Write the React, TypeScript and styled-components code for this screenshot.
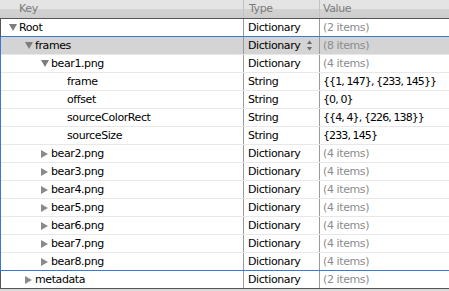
import styled, { createGlobalStyle } from "styled-components"

const GlobalStyle = createGlobalStyle`
    html, body {
        margin: 0;
        padding: 0;
        background: #d9d9d9;
    }
    body {
        font-family: "DejaVu Sans", "Liberation Sans", sans-serif;
        font-size: 11px;
        letter-spacing: -0.4px;
    }
`

const RING = "#3a78d6"

const Table = styled.div`
    width: 449px;
    background: #fff;
    overflow: hidden;
`

const Header = styled.div`
    display: flex;
    height: 18px;
    border-bottom: 1px solid #555;
    background: linear-gradient(#e4e4e4 0, #e4e4e4 50%, #d2d2d2 50%, #cecece 100%);
    color: #7a7a7a;
    line-height: 18px;
`

const HeadCell = styled.div<{ $w?: number; $pad: number }>`
    flex: ${(p) => (p.$w ? `0 0 ${p.$w}px` : "1")};
    box-sizing: border-box;
    padding-left: ${(p) => p.$pad}px;
    border-right: ${(p) => (p.$w ? "1px solid #c2c2c2" : "none")};
`

const Body = styled.div`
    border-left: 1px solid #555;
`

const Group = styled.div`
    margin-left: -1px;
    border-left: 1px solid ${RING};
`

const Row = styled.div<{ $selected?: boolean; $line?: string }>`
    display: flex;
    height: 17px;
    line-height: 17px;
    border-bottom: 1px solid ${(p) => p.$line || "#e8e8e8"};
    background: ${(p) => (p.$selected ? "#d4d4d4" : "#fff")};
    color: #000;
`

const KeyCell = styled.div<{ $level: number }>`
    flex: 0 0 243px;
    box-sizing: border-box;
    border-right: 1px solid #9a9a9a;
    display: flex;
    align-items: center;
    padding-left: ${(p) => 8 + p.$level * 16}px;
    white-space: nowrap;
`

const Disclosure = styled.span<{ $open?: boolean; $leaf?: boolean }>`
    flex: 0 0 10px;
    height: 17px;
    display: flex;
    align-items: center;
    justify-content: flex-start;
    visibility: ${(p) => (p.$leaf ? "hidden" : "visible")};
    &::before {
        content: "";
        display: block;
        ${(p) =>
            p.$open
                ? `border-left: 4px solid transparent; border-right: 4px solid transparent; border-top: 7px solid #7d7d7d;`
                : `border-top: 4px solid transparent; border-bottom: 4px solid transparent; border-left: 7px solid #8a8a8a;`}
    }
`

const TypeCell = styled.div`
    flex: 0 0 76px;
    box-sizing: border-box;
    border-right: 1px solid #9a9a9a;
    padding-left: 4px;
    display: flex;
    align-items: center;
    justify-content: space-between;
    padding-right: 7px;
`

const ValueCell = styled.div<{ $muted?: boolean }>`
    flex: 1;
    padding-left: 3px;
    color: ${(p) => (p.$muted ? "#8c8c8c" : "#000")};
    letter-spacing: ${(p) => (p.$muted ? "-0.4px" : "-0.9px")};
    white-space: nowrap;
`

const Stepper = () => (
    <svg width="5" height="11" viewBox="0 0 5 11">
        <path d="M2.5 0.5 L5 4 L0 4 Z" fill="#6a6a6a" />
        <path d="M0 7 L5 7 L2.5 10.5 Z" fill="#6a6a6a" />
    </svg>
)

type Item = {
    key: string
    level: number
    type: string
    value: string
    muted?: boolean
    open?: boolean
    leaf?: boolean
    selected?: boolean
    line?: string
}

const Line = ({ item }: { item: Item }) => (
    <Row $selected={item.selected} $line={item.line}>
        <KeyCell $level={item.level}>
            <Disclosure $open={item.open} $leaf={item.leaf} />
            {item.key}
        </KeyCell>
        <TypeCell>
            {item.type}
            {item.selected && <Stepper />}
        </TypeCell>
        <ValueCell $muted={item.muted}>{item.value}</ValueCell>
    </Row>
)

const bears: Item[] = [2, 3, 4, 5, 6, 7, 8].map((n) => ({
    key: `bear${n}.png`,
    level: 2,
    type: "Dictionary",
    value: "(4 items)",
    muted: true,
    line: n === 8 ? RING : undefined,
}))

const framesGroup: Item[] = [
    { key: "frames", level: 1, type: "Dictionary", value: "(8 items)", muted: true, open: true, selected: true },
    { key: "bear1.png", level: 2, type: "Dictionary", value: "(4 items)", muted: true, open: true },
    { key: "frame", level: 3, type: "String", value: "{{1, 147}, {233, 145}}", leaf: true },
    { key: "offset", level: 3, type: "String", value: "{0, 0}", leaf: true },
    { key: "sourceColorRect", level: 3, type: "String", value: "{{4, 4}, {226, 138}}", leaf: true },
    { key: "sourceSize", level: 3, type: "String", value: "{233, 145}", leaf: true },
    ...bears,
]

const App = () => {
    return (
        <>
            <GlobalStyle />
            <Table>
                <Header>
                    <HeadCell $w={244} $pad={19}>Key</HeadCell>
                    <HeadCell $w={76} $pad={5}>Type</HeadCell>
                    <HeadCell $pad={3}>Value</HeadCell>
                </Header>
                <Body>
                    <Line item={{ key: "Root", level: 0, type: "Dictionary", value: "(2 items)", muted: true, open: true, line: RING }} />
                    <Group>
                        {framesGroup.map((item) => (
                            <Line key={item.key} item={item} />
                        ))}
                    </Group>
                    <Line item={{ key: "metadata", level: 1, type: "Dictionary", value: "(2 items)", muted: true, line: "#555" }} />
                </Body>
            </Table>
        </>
    )
}

export default App
